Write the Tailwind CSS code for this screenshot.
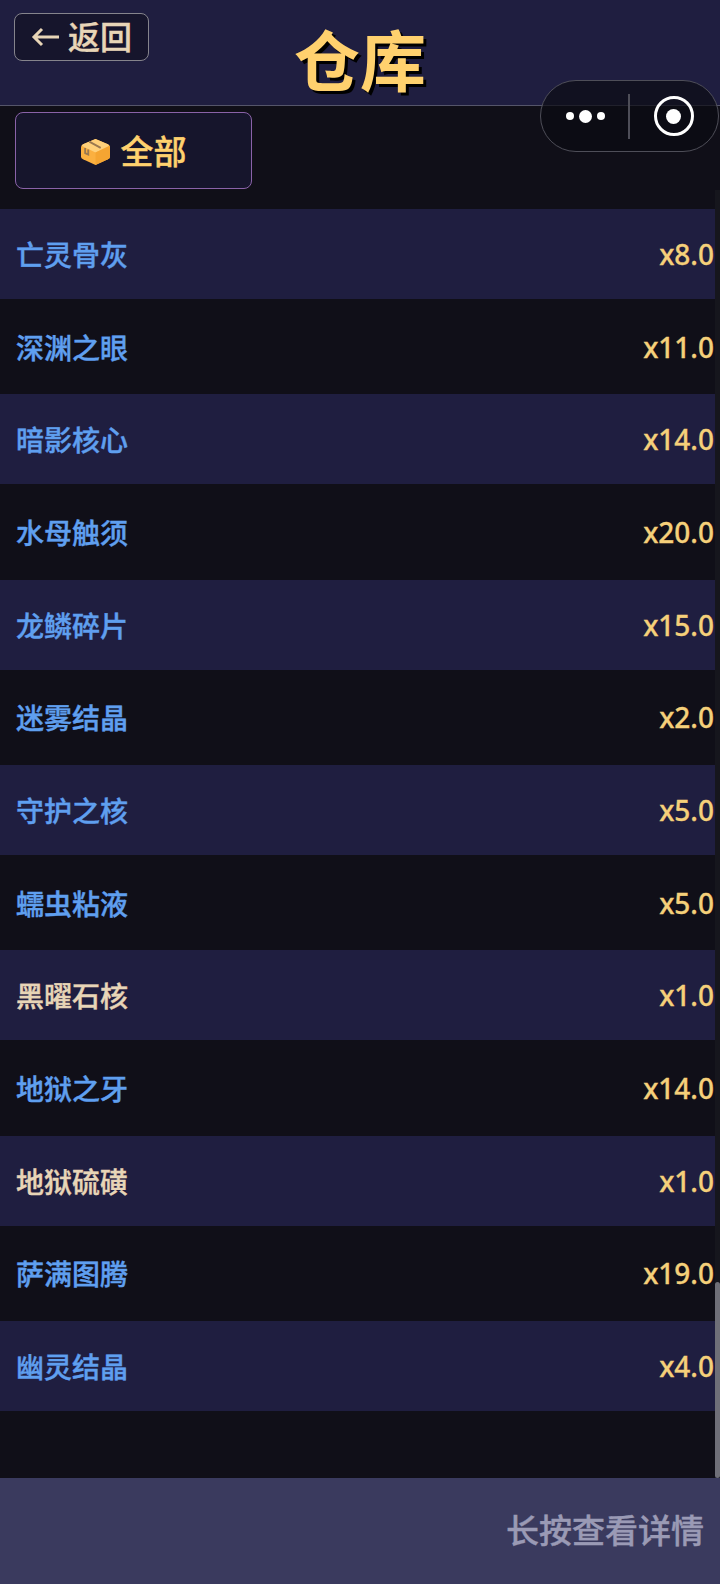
<!DOCTYPE html>
<html lang="zh-CN">
<head>
    <meta charset="UTF-8">
    <meta name="viewport" content="width=device-width, initial-scale=1.0">
    <title>仓库</title>
    <script src="https://cdn.jsdelivr.net/npm/@tailwindcss/browser@4"></script>
</head>
<body class="bg-[#100f18] font-['Noto_Sans','Noto_Sans_CJK_SC',sans-serif]">
    <div class="relative w-[720px] h-[1584px] overflow-hidden flex flex-col">

        <!-- header -->
        <div class="relative h-[106px] shrink-0 bg-[#1f1e40] border-b border-[#55556a]">
            <button class="absolute left-[14px] top-[13px] w-[135px] h-[48px] flex items-center justify-center gap-[9px] rounded-lg border-[1.5px] border-[#85848c] bg-[#16152c] text-[#e8d5b7] text-[32px] font-medium leading-none [-webkit-text-stroke:0.4px_#e8d5b7]">
                <svg class="w-[28px] h-[22px]" viewBox="0 0 28 22" fill="none" stroke="#e8d5b7" stroke-width="3">
                    <path d="M28 11H3M11 3 3 11 11 19"/>
                </svg>
                <span>返回</span>
            </button>
            <h1 class="text-center text-[#ffd16e] text-[66px] font-bold leading-none pt-[27px] [text-shadow:3px_3px_0_#000]">仓库</h1>
        </div>

        <!-- tab -->
        <div class="h-[103px] shrink-0 px-[15px] pt-[6px]">
            <div class="w-[237px] h-[77px] pt-[1px] flex items-center justify-center gap-[11px] rounded-lg border-[1.5px] border-[#8a62a8] bg-[#16152c] text-[#ffd16e] text-[33px] font-medium leading-none [-webkit-text-stroke:0.4px_#ffd16e]">
                <svg class="w-[29px] h-[29px]" viewBox="0 0 28 28">
                    <path d="M14 2 26 7Q28 8 28 10V19Q28 20.500 26 21.500L14 27 2 21.500Q0 20.500 0 19V10Q0 8 2 7Z" fill="#fbb040"/>
                    <path d="M14 2 26 7Q28 8 26.500 9L14 15 1.500 9Q0 8 2 7Z" fill="#ffd07a"/>
                    <path d="M14 15 28 8.500V19Q28 20.500 26 21.500L14 27Z" fill="#f5a532"/>
                    <path d="M8 4.500 19 10.500M4 10.500 4 15.500 7 17 7 12" fill="none" stroke="#9a7850" stroke-width="1.800"/>
                </svg>
                <span>全部</span>
            </div>
        </div>

        <!-- list -->
        <div class="flex flex-col text-[28px] font-medium leading-none">
            <div class="h-[90px] mb-[2.67px] pt-[2px] pl-[16px] pr-[6px] flex items-center justify-between bg-[#1f1e40]">
                <span class="text-[#5f9fef] [-webkit-text-stroke:0.4px_#5f9fef]">亡灵骨灰</span><span class="mb-[2px] text-[#f5d07a] [-webkit-text-stroke:0.3px_#f5d07a]">x8.0</span>
            </div>
            <div class="h-[90px] mb-[2.67px] pt-[2px] pl-[16px] pr-[6px] flex items-center justify-between">
                <span class="text-[#5f9fef] [-webkit-text-stroke:0.4px_#5f9fef]">深渊之眼</span><span class="mb-[2px] text-[#f5d07a] [-webkit-text-stroke:0.3px_#f5d07a]">x11.0</span>
            </div>
            <div class="h-[90px] mb-[2.67px] pt-[2px] pl-[16px] pr-[6px] flex items-center justify-between bg-[#1f1e40]">
                <span class="text-[#5f9fef] [-webkit-text-stroke:0.4px_#5f9fef]">暗影核心</span><span class="mb-[2px] text-[#f5d07a] [-webkit-text-stroke:0.3px_#f5d07a]">x14.0</span>
            </div>
            <div class="h-[90px] mb-[2.67px] pt-[2px] pl-[16px] pr-[6px] flex items-center justify-between">
                <span class="text-[#5f9fef] [-webkit-text-stroke:0.4px_#5f9fef]">水母触须</span><span class="mb-[2px] text-[#f5d07a] [-webkit-text-stroke:0.3px_#f5d07a]">x20.0</span>
            </div>
            <div class="h-[90px] mb-[2.67px] pt-[2px] pl-[16px] pr-[6px] flex items-center justify-between bg-[#1f1e40]">
                <span class="text-[#5f9fef] [-webkit-text-stroke:0.4px_#5f9fef]">龙鳞碎片</span><span class="mb-[2px] text-[#f5d07a] [-webkit-text-stroke:0.3px_#f5d07a]">x15.0</span>
            </div>
            <div class="h-[90px] mb-[2.67px] pt-[2px] pl-[16px] pr-[6px] flex items-center justify-between">
                <span class="text-[#5f9fef] [-webkit-text-stroke:0.4px_#5f9fef]">迷雾结晶</span><span class="mb-[2px] text-[#f5d07a] [-webkit-text-stroke:0.3px_#f5d07a]">x2.0</span>
            </div>
            <div class="h-[90px] mb-[2.67px] pt-[2px] pl-[16px] pr-[6px] flex items-center justify-between bg-[#1f1e40]">
                <span class="text-[#5f9fef] [-webkit-text-stroke:0.4px_#5f9fef]">守护之核</span><span class="mb-[2px] text-[#f5d07a] [-webkit-text-stroke:0.3px_#f5d07a]">x5.0</span>
            </div>
            <div class="h-[90px] mb-[2.67px] pt-[2px] pl-[16px] pr-[6px] flex items-center justify-between">
                <span class="text-[#5f9fef] [-webkit-text-stroke:0.4px_#5f9fef]">蠕虫粘液</span><span class="mb-[2px] text-[#f5d07a] [-webkit-text-stroke:0.3px_#f5d07a]">x5.0</span>
            </div>
            <div class="h-[90px] mb-[2.67px] pt-[2px] pl-[16px] pr-[6px] flex items-center justify-between bg-[#1f1e40]">
                <span class="text-[#e8d5b7] [-webkit-text-stroke:0.4px_#e8d5b7]">黑曜石核</span><span class="mb-[2px] text-[#f5d07a] [-webkit-text-stroke:0.3px_#f5d07a]">x1.0</span>
            </div>
            <div class="h-[90px] mb-[2.67px] pt-[2px] pl-[16px] pr-[6px] flex items-center justify-between">
                <span class="text-[#5f9fef] [-webkit-text-stroke:0.4px_#5f9fef]">地狱之牙</span><span class="mb-[2px] text-[#f5d07a] [-webkit-text-stroke:0.3px_#f5d07a]">x14.0</span>
            </div>
            <div class="h-[90px] mb-[2.67px] pt-[2px] pl-[16px] pr-[6px] flex items-center justify-between bg-[#1f1e40]">
                <span class="text-[#e8d5b7] [-webkit-text-stroke:0.4px_#e8d5b7]">地狱硫磺</span><span class="mb-[2px] text-[#f5d07a] [-webkit-text-stroke:0.3px_#f5d07a]">x1.0</span>
            </div>
            <div class="h-[90px] mb-[2.67px] pt-[2px] pl-[16px] pr-[6px] flex items-center justify-between">
                <span class="text-[#5f9fef] [-webkit-text-stroke:0.4px_#5f9fef]">萨满图腾</span><span class="mb-[2px] text-[#f5d07a] [-webkit-text-stroke:0.3px_#f5d07a]">x19.0</span>
            </div>
            <div class="h-[90px] pt-[2px] pl-[16px] pr-[6px] flex items-center justify-between bg-[#1f1e40]">
                <span class="text-[#5f9fef] [-webkit-text-stroke:0.4px_#5f9fef]">幽灵结晶</span><span class="mb-[2px] text-[#f5d07a] [-webkit-text-stroke:0.3px_#f5d07a]">x4.0</span>
            </div>
        </div>

        <!-- bottom hint -->
        <div class="mt-auto h-[106px] shrink-0 pr-[16px] flex items-center justify-end bg-[#3a3a5e] text-[#9a9ab5] text-[33px] font-medium [-webkit-text-stroke:0.4px_#9a9ab5]">长按查看详情</div>

        <!-- scrollbar -->
        <div class="absolute right-0 top-[190px] w-[5px] h-[1288px] bg-[#16161d]"></div>
        <div class="absolute right-0 top-[1282px] w-[5px] h-[196px] rounded-[3px] bg-[#6f6f78]"></div>

        <!-- wechat capsule -->
        <div class="absolute left-[540px] top-[80px] w-[179px] h-[72px] flex items-center rounded-full border-[1.5px] border-[#4e4e58] bg-[#0c0c12]/70">
            <div class="w-[87px] flex items-center justify-center gap-[5px] pl-[2px]">
                <span class="w-[8px] h-[8px] rounded-full bg-white"></span>
                <span class="w-[13px] h-[13px] rounded-full bg-white"></span>
                <span class="w-[8px] h-[8px] rounded-full bg-white"></span>
            </div>
            <div class="w-[1.5px] h-[45px] bg-[#4e4e58]"></div>
            <div class="flex-1 flex items-center justify-center">
                <div class="w-[40px] h-[40px] rounded-full border-[3px] border-white flex items-center justify-center">
                    <span class="w-[15px] h-[15px] rounded-full bg-white"></span>
                </div>
            </div>
        </div>
    </div>
</body>
</html>
